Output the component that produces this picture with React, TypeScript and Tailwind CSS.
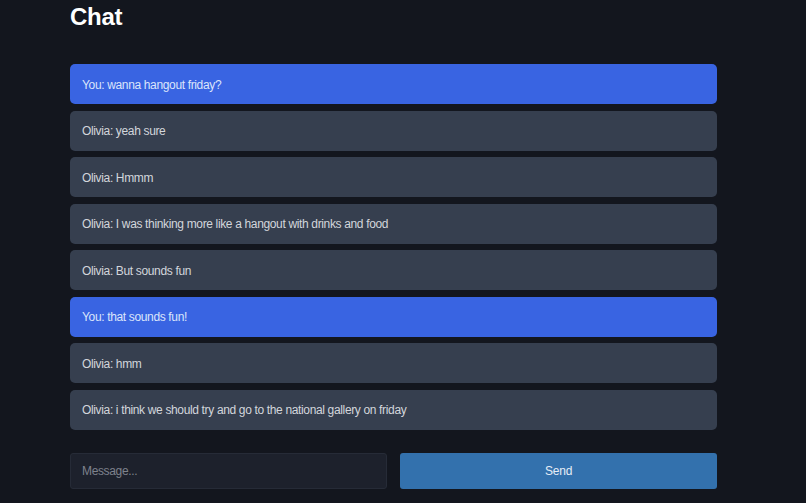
import React from "react";

const messages: { you: boolean; text: string }[] = [
  { you: true, text: "You: wanna hangout friday?" },
  { you: false, text: "Olivia: yeah sure" },
  { you: false, text: "Olivia: Hmmm" },
  { you: false, text: "Olivia: I was thinking more like a hangout with drinks and food" },
  { you: false, text: "Olivia: But sounds fun" },
  { you: true, text: "You: that sounds fun!" },
  { you: false, text: "Olivia: hmm" },
  { you: false, text: "Olivia: i think we should try and go to the national gallery on friday" },
];

export default function App() {
  return (
    <div
      className="w-[806px] h-[503px] bg-[#13161e] overflow-hidden pl-[70px]"
      style={{ fontFamily: "'Liberation Sans', Arial, sans-serif" }}
    >
      <div className="w-[647px]">
        <h1 className="text-[24px] font-bold text-white leading-[32px] pt-[1px] tracking-[-0.3px]">Chat</h1>
        <div className="flex flex-col gap-[6.5px] mt-[31px]">
          {messages.map((m, i) => (
            <div
              key={i}
              className={`h-[40px] rounded-[5px] flex items-center px-[12px] pt-[1px] text-[12px] tracking-[-0.35px] ${
                m.you ? "bg-[#3964e2] text-[#dbe4fb]" : "bg-[#363f4f] text-[#d3d6dc]"
              }`}
            >
              {m.text}
            </div>
          ))}
        </div>
        <div className="flex gap-[13px] mt-[23px]">
          <div className="w-[317px] h-[36px] bg-[#1d212c] border border-[#262b37] rounded-[3px] flex items-center px-[11px] text-[12px] tracking-[-0.35px] text-[#7d828d]">
            Message...
          </div>
          <div className="flex-1 h-[36px] bg-[#3371ad] rounded-[3px] flex items-center justify-center text-[12px] font-medium text-[#e6edf6] tracking-[-0.2px]">
            Send
          </div>
        </div>
      </div>
    </div>
  );
}
